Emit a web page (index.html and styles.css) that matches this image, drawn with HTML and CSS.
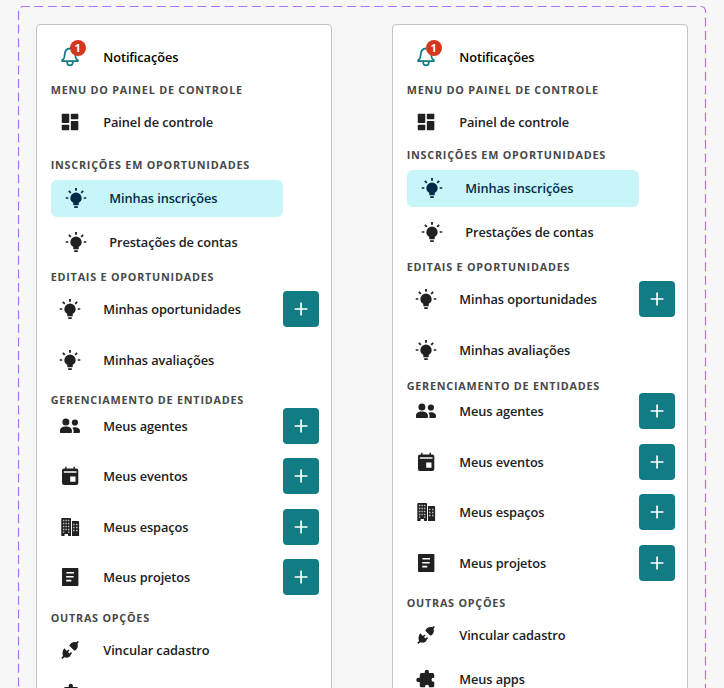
FILE: index.html
```html
<!DOCTYPE html>
<html lang="pt-BR">
<head>
<meta charset="utf-8">
<title>Menu do painel</title>
<link rel="stylesheet" href="styles.css">
</head>
<body>
<svg class="sprite" width="0" height="0" aria-hidden="true">
  <symbol id="bell" viewBox="0 0 22 22"><path d="M3.200 15.200h15.600v-.9l-1.600-1.700c-.6-.7-.8-1.700-.9-4.100C16.100 4.500 14.200 2.500 11 2.500S5.900 4.500 5.700 8.500c-.1 2.400-.3 3.400-.9 4.100l-1.600 1.700z" fill="none" stroke="currentColor" stroke-width="1.800" stroke-linejoin="round"/><path d="M8.200 16v.5a2.800 2.800 0 0 0 5.600 0V16" fill="none" stroke="currentColor" stroke-width="1.700"/></symbol>
  <symbol id="dash" viewBox="0 0 24 24"><rect x="3" y="3" width="8.200" height="10" rx=".8"/><rect x="12.900" y="3" width="8.200" height="6" rx=".8"/><rect x="3" y="15" width="8.200" height="6" rx=".8"/><rect x="12.900" y="11" width="8.200" height="10" rx=".8"/></symbol>
  <symbol id="bulb" viewBox="0 0 24 24"><path d="M12 6a6.200 6.200 0 0 1 6.200 6.200c0 2.100-1.300 4-3.200 5V19a1 1 0 0 1-1 1h-4a1 1 0 0 1-1-1v-1.800c-1.900-1-3.200-2.900-3.200-5A6.200 6.200 0 0 1 12 6M14 21v1a1 1 0 0 1-1 1h-2a1 1 0 0 1-1-1v-1h4M20.400 11.200h2.800v1.600h-2.800zM.8 11.200h2.800v1.600H.8zM13 1v3h-2V1zM4.900 3.500 7 5.600 5.600 7 3.500 4.900zM17 5.600l2.100-2.100 1.400 1.400L18.400 7z"/></symbol>
  <symbol id="people" viewBox="0 0 22 22"><circle cx="6.900" cy="7" r="3.500"/><circle cx="15.900" cy="7.500" r="3.100"/><path d="M1 16.900v-1.300c0-2.500 2.600-4 5.900-4s6 1.500 6 4v1.300q0 1.200-1.200 1.200H2.200q-1.200 0-1.200-1.200zM14.200 18h5.600q1.200 0 1.200-1.200v-1.100c0-2.100-2.300-3.500-5-3.500-1 0-2 .2-2.800.5 1 .9 1.400 1.900 1.400 3.300 0 .8-.1 1.400-.4 2z"/></symbol>
  <symbol id="event" viewBox="0 0 22 22"><path fill-rule="evenodd" d="M6.200 1.800h1.400v1.700h6.900V1.800h1.400v1.700h1.400a2 2 0 0 1 2 2v12.400a2 2 0 0 1-2 2H5a2 2 0 0 1-2-2V5.500a2 2 0 0 1 2-2h1.200zM4.800 6.200v1.500h12.700V6.200zM11.200 11.600v5.100h5.300v-5.100z"/></symbol>
  <symbol id="building" viewBox="0 0 22 22"><path d="M2.300 3q0-.9.9-.9h8q.8 0 .8.900v17.100H9.100v-1.600q0-.5-.5-.5H6q-.5 0-.5.500v1.600H2.300zM13 5h6.200q.9 0 .9.900v14.200H13z"/><path d="M3.900 4.500h1.500m1 0h1.500m1 0h1.500M3.900 7.500h1.500m1 0h1.500m1 0h1.500M3.900 10.500h1.500m1 0h1.500m1 0h1.500M3.900 13.500h1.500m1 0h1.500m1 0h1.500M3.900 16.100h1.500m3.500 0h1.500M14 8.500h1.500m1.500 0h1.500M14 11.500h1.500m1.500 0h1.500M14 14.500h1.500m1.500 0h1.500" stroke="#fff" stroke-width="1.300" opacity=".7"/></symbol>
  <symbol id="article" viewBox="0 0 22 22"><path fill-rule="evenodd" d="M3.800 2h14.800q.8 0 .8.800v16.500q0 .8-.8.800H3.800q-.8 0-.8-.8V2.800q0-.8.800-.8zM7.400 6v1.600h7.600V6zM7.200 9.900v1.600h7.500V9.900zM7.200 13.800v1.600h5.100v-1.600z"/></symbol>
  <symbol id="plug" viewBox="0 0 22 22"><path d="M10.300 6.700c1-2.600 4-4.400 7-3.500L18.800 2l1.100 1.100-1.400 1.600c1 2.900-.3 5.900-3.100 7.100zM5.200 9.200l2.700 2.700 1.500-1.400 1.100 1.100L9 13l1.500 1.500 1.500-1.400 1.100 1.100-1.300 1.300c-.8 2.900-3.900 3.900-6.500 2.800l-1.900 1.600-1.100-1.100 1.700-1.900c-.9-2.300-.5-5.800 1.200-7.700z"/></symbol>
  <symbol id="puzzle" viewBox="0 0 24 24"><path d="M10.600 4.200a2.300 2.300 0 0 1 4.600 0V5.500H19a2 2 0 0 1 2 2v3.200h-.8a2.200 2.200 0 0 0 0 4.400h.8V19a2 2 0 0 1-2 2h-3.700v-.6a2.200 2.200 0 0 0-4.400 0v.6H7.200a2 2 0 0 1-2-2v-3.600H3.800a2.400 2.400 0 0 1 0-4.800h1.400V7.500a2 2 0 0 1 2-2h3.400z"/></symbol>
  <symbol id="plus" viewBox="0 0 36 36"><path d="M18.100 11.600v12.800M11.700 18h12.800" stroke="#fff" stroke-width="1.700"/></symbol>
</svg>
<svg class="outline" width="724" height="688" aria-hidden="true"><path d="M18.500 700V11.500q0-5 5-5H700.500q5 0 5 5V700"/></svg>
<main class="board">
  <nav class="card">
    <a class="row notif"><span class="ico bell"><svg><use href="#bell"/></svg><b class="badge">1</b></span><span class="label">Notificações</span></a>
    <h2 class="h-main">Menu do painel de controle</h2>
    <a class="row first"><span class="ico"><svg><use href="#dash"/></svg></span><span class="label">Painel de controle</span></a>
    <h2 class="h-insc">Inscrições em oportunidades</h2>
    <a class="row sub active"><span class="ico"><svg><use href="#bulb"/></svg></span><span class="label">Minhas inscrições</span></a>
    <a class="row sub"><span class="ico"><svg><use href="#bulb"/></svg></span><span class="label">Prestações de contas</span></a>
    <h2 class="h-edit">Editais e oportunidades</h2>
    <a class="row first"><span class="ico"><svg><use href="#bulb"/></svg></span><span class="label">Minhas oportunidades</span><svg class="add"><use href="#plus"/></svg></a>
    <a class="row next"><span class="ico"><svg><use href="#bulb"/></svg></span><span class="label">Minhas avaliações</span></a>
    <h2 class="h-ent">Gerenciamento de entidades</h2>
    <a class="row tight"><span class="ico"><svg><use href="#people"/></svg></span><span class="label">Meus agentes</span><svg class="add"><use href="#plus"/></svg></a>
    <a class="row next"><span class="ico"><svg><use href="#event"/></svg></span><span class="label">Meus eventos</span><svg class="add"><use href="#plus"/></svg></a>
    <a class="row next"><span class="ico"><svg><use href="#building"/></svg></span><span class="label">Meus espaços</span><svg class="add"><use href="#plus"/></svg></a>
    <a class="row next"><span class="ico"><svg><use href="#article"/></svg></span><span class="label">Meus projetos</span><svg class="add"><use href="#plus"/></svg></a>
    <h2 class="h-other">Outras opções</h2>
    <a class="row first"><span class="ico"><svg><use href="#plug"/></svg></span><span class="label">Vincular cadastro</span></a>
    <a class="row last"><span class="ico"><svg><use href="#puzzle"/></svg></span></a>
  </nav>
  <nav class="card compact">
    <a class="row notif"><span class="ico bell"><svg><use href="#bell"/></svg><b class="badge">1</b></span><span class="label">Notificações</span></a>
    <h2 class="h-main">Menu do painel de controle</h2>
    <a class="row first"><span class="ico"><svg><use href="#dash"/></svg></span><span class="label">Painel de controle</span></a>
    <h2 class="h-insc">Inscrições em oportunidades</h2>
    <a class="row sub active"><span class="ico"><svg><use href="#bulb"/></svg></span><span class="label">Minhas inscrições</span></a>
    <a class="row sub"><span class="ico"><svg><use href="#bulb"/></svg></span><span class="label">Prestações de contas</span></a>
    <h2 class="h-edit">Editais e oportunidades</h2>
    <a class="row first"><span class="ico"><svg><use href="#bulb"/></svg></span><span class="label">Minhas oportunidades</span><svg class="add"><use href="#plus"/></svg></a>
    <a class="row next"><span class="ico"><svg><use href="#bulb"/></svg></span><span class="label">Minhas avaliações</span></a>
    <h2 class="h-ent">Gerenciamento de entidades</h2>
    <a class="row tight"><span class="ico"><svg><use href="#people"/></svg></span><span class="label">Meus agentes</span><svg class="add"><use href="#plus"/></svg></a>
    <a class="row next"><span class="ico"><svg><use href="#event"/></svg></span><span class="label">Meus eventos</span><svg class="add"><use href="#plus"/></svg></a>
    <a class="row next"><span class="ico"><svg><use href="#building"/></svg></span><span class="label">Meus espaços</span><svg class="add"><use href="#plus"/></svg></a>
    <a class="row next"><span class="ico"><svg><use href="#article"/></svg></span><span class="label">Meus projetos</span><svg class="add"><use href="#plus"/></svg></a>
    <h2 class="h-other">Outras opções</h2>
    <a class="row first"><span class="ico"><svg><use href="#plug"/></svg></span><span class="label">Vincular cadastro</span></a>
    <a class="row last"><span class="ico"><svg><use href="#puzzle"/></svg></span><span class="label">Meus apps</span></a>
  </nav>
</main>
</body>
</html>
```
FILE: styles.css
```css
* { box-sizing: border-box; }
html, body { margin: 0; height: 688px; overflow: hidden; }
body { background: #f7f7f7; font-family: "Open Sans", sans-serif; color: #202020; }
.sprite { position: absolute; }
.outline { position: absolute; inset: 0; }
.outline path { fill: none; stroke: #ad72f7; stroke-width: 1.200; stroke-dasharray: 9px 4.600px; }
.board { position: relative; display: flex; gap: 60px; padding: 24px 36px 0; height: 688px; overflow: hidden; }
.card {
  width: 296px; height: 720px; flex: none;
  padding: 14px 11px 0 13.700px;
  background: #fff; border: 1px solid #c2c2c2; border-radius: 4px;
}
.row { display: flex; align-items: center; height: 36px; padding-left: 8px; }
.ico { width: 22px; height: 22px; flex: none; margin-right: 22.600px; }
.ico svg { display: block; width: 22px; height: 22px; fill: currentColor; }
.label {
  flex: 1; font-size: 12.800px; line-height: 18px; font-weight: 600; white-space: nowrap;
  letter-spacing: -.1px;
}
.notif .label { color: #000; }
.bell { position: relative; color: #117c83; }
.badge {
  position: absolute; left: 11px; top: -6.500px; width: 16px; height: 16px; border-radius: 50%;
  background: #d5371d; color: #fff; font-size: 11px; line-height: 16px; text-align: center; font-weight: 700;
}
h2 {
  height: 14px; margin: 0; font-size: 10.800px; line-height: 14px; font-weight: 700;
  letter-spacing: .770px; text-transform: uppercase; white-space: nowrap; color: #484848;
}
.h-main { margin-top: 8px; }
.h-insc { margin-top: 18px; }
.h-edit { margin-top: 10px; }
.h-ent { margin-top: 15.500px; }
.h-other { margin-top: 15.300px; }
.compact .h-insc { margin-top: 8px; }
.compact .h-ent { margin-top: 10.800px; }
.first { margin-top: 7.200px; }
.next { margin-top: 14.500px; }
.tight { margin-top: .6px; }
.last { margin-top: 7.500px; }
.sub { margin-top: 7.500px; padding-left: 14px; width: 232px; }
.active { height: 37px; margin-top: 7.400px; border-radius: 6px; background: #c8f5f8; color: #002b49; }
.add { width: 36px; height: 36px; margin-right: 1px; flex: none; border-radius: 4px; background: #117c83; }
```
